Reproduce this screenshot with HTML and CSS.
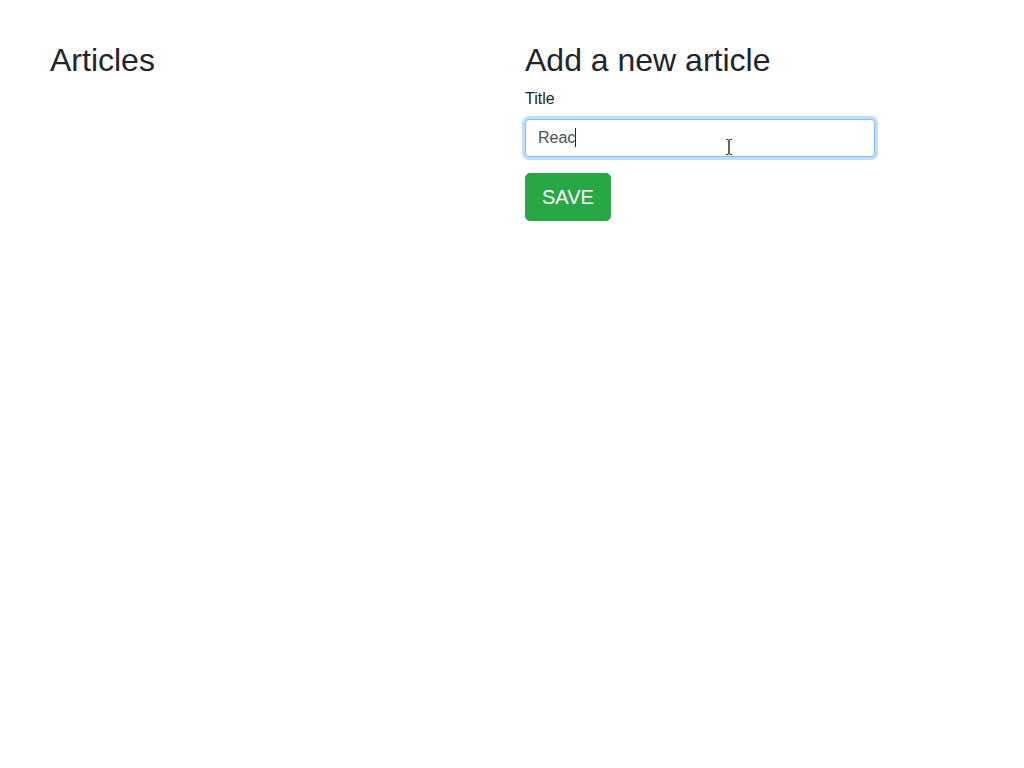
FILE: index.html
```html
<!DOCTYPE html>
<html lang="en">
<head>
<meta charset="utf-8">
<title>Articles</title>
<link rel="stylesheet" href="styles.css">
</head>
<body>
<div class="page">
  <section class="col-list">
    <h2 class="heading">Articles</h2>
  </section>
  <section class="col-form">
    <h2 class="heading">Add a new article</h2>
    <form class="form">
      <div class="form-group">
        <label class="label" for="title">Title</label>
        <div class="input-wrap">
          <div class="form-control" id="title">Reac<span class="caret"></span></div>
          <svg class="ibeam" width="10" height="20" viewBox="0 0 10 20" aria-hidden="true">
            <path d="M1 1h3l1 1 1-1h3v2H6v14h3v2H6l-1-1-1 1H1v-2h3V3H1z" fill="#fff"/>
            <path d="M2 2h2l1 1 1-1h2v0.8H5.6v14.4H8V18H6l-1-1-1 1H2v-0.8h2.4V2.8H2z" fill="#000"/>
          </svg>
        </div>
      </div>
      <button type="button" class="btn-save">SAVE</button>
    </form>
  </section>
</div>
</body>
</html>
```

FILE: styles.css
```css
* { box-sizing: border-box; }
html, body { margin: 0; padding: 0; background: #fff; }
body {
  font-family: "Liberation Sans", Arial, sans-serif;
  font-size: 16px;
  line-height: 1.5;
  color: #212529;
}
.page {
  display: flex;
  padding: 41px 50px 0 50px;
}
.col-list { width: 475px; flex: none; }
.col-form { width: 350px; flex: none; }
.heading {
  margin: 0 0 8px 0;
  font-size: 32px;
  font-weight: 400;
  line-height: 1.2;
  color: #212529;
}
.form { margin: 0; }
.form-group { margin-bottom: 16px; }
.label {
  display: inline-block;
  margin-bottom: 8px;
  font-size: 16px;
}
.input-wrap { position: relative; }
.form-control {
  height: 38px;
  width: 350px;
  padding: 6px 12px;
  font-size: 16px;
  line-height: 24px;
  color: #495057;
  background: #fff;
  border: 1px solid #80bdff;
  border-radius: 4px;
  box-shadow: 0 0 0 3px rgba(0, 123, 255, 0.25);
}
.caret {
  display: inline-block;
  width: 1px;
  height: 19px;
  background: #212529;
  vertical-align: -4px;
}
.ibeam {
  position: absolute;
  left: 199px;
  top: 18px;
}
.btn-save {
  display: inline-block;
  padding: 8px 16px;
  font-family: inherit;
  font-size: 20px;
  line-height: 1.5;
  color: #fff;
  background: #28a745;
  border: 1px solid #28a745;
  border-radius: 4.8px;
  cursor: pointer;
}
```
